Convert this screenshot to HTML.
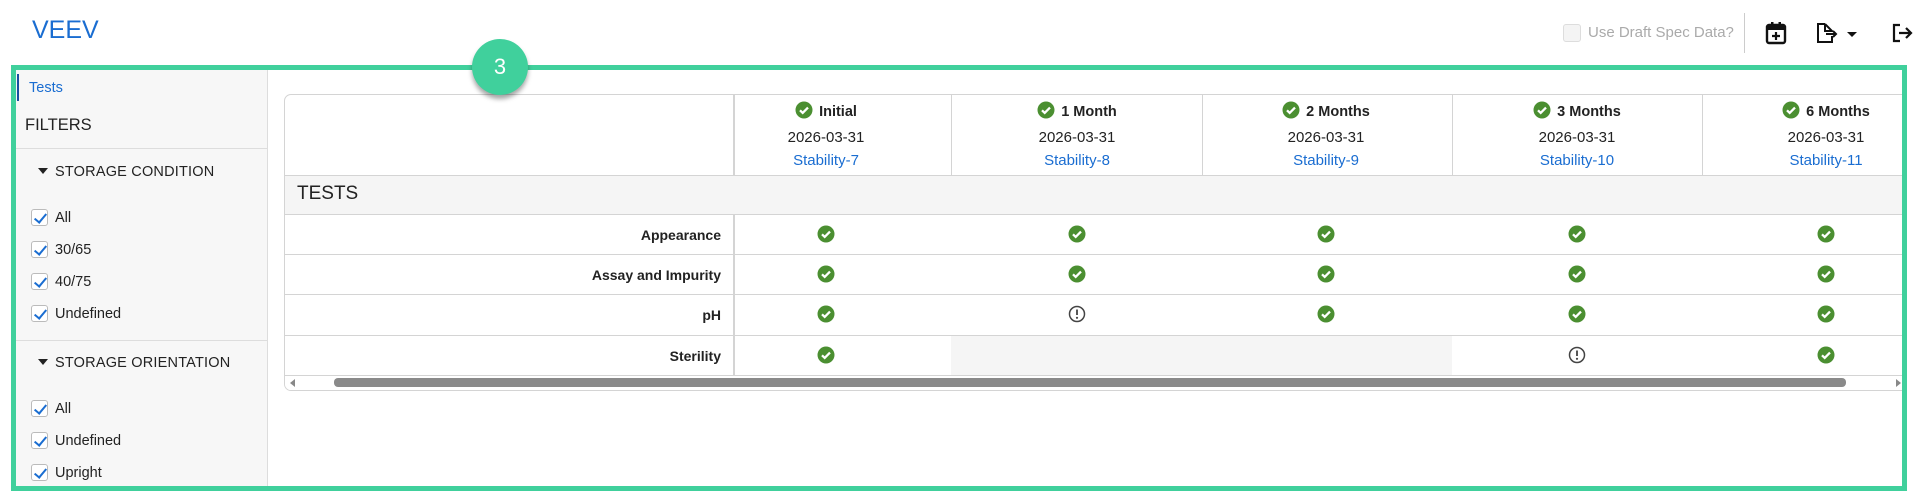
<!DOCTYPE html>
<html><head><style>
*{box-sizing:border-box;margin:0;padding:0}
body{width:1917px;height:504px;background:#fff;font-family:"Liberation Sans",Arial,sans-serif;position:relative;overflow:hidden;color:#222}
.a{position:absolute}
.veev{left:32px;top:16px;font-size:25px;color:#1a6dd1}
.frame{left:11px;top:65px;width:1896px;height:426px;border:5px solid #40d09c;overflow:hidden}
.badge{left:472px;top:39px;width:56px;height:56px;border-radius:50%;background:#40d09c;color:#fff;font-size:22px;text-align:center;line-height:56px;box-shadow:0 4px 5px rgba(0,0,0,.35)}
.side{left:0;top:0;width:252px;height:420px;background:#f7f7f7;border-right:1px solid #ddd}
.cb{width:17px;height:17px;border:1px solid #bbb;border-radius:3px;background:#fff}
.cb::after{content:"";position:absolute;left:5px;top:1px;width:5px;height:10px;border-right:2px solid #1a6dd1;border-bottom:2px solid #1a6dd1;transform:rotate(40deg)}
.lbl{font-size:14.5px;color:#222}
.hd{font-size:14.5px;color:#222;letter-spacing:.2px}
.card{left:268px;top:24px;width:1640px;height:297px;border:1px solid #d4d4d4;border-radius:7px;background:#fff;overflow:hidden}
.hline{height:1px;background:#d4d4d4;left:0;width:100%}
.t{font-size:15px}
.b{font-weight:bold}
.lnk{color:#1a6dd1}
.ck{width:18px;height:18px}
</style></head><body>
<div class="a veev">VEEV</div>

<div class="a" style="left:1563px;top:24px;width:18px;height:18px;border:1px solid #ddd;border-radius:3px;background:#f4f4f4"></div>
<div class="a" style="left:1588px;top:24px;font-size:15px;color:#aaa">Use Draft Spec Data?</div>
<div class="a" style="left:1744px;top:13px;width:1px;height:40px;background:#ccc"></div>
<svg class="a" style="left:1765px;top:21px" width="22" height="24" viewBox="0 0 22 24"><rect x="2" y="4" width="18" height="18" rx="2" fill="none" stroke="#111" stroke-width="2.4"/><rect x="2" y="4" width="18" height="5" fill="#111"/><rect x="6" y="1" width="2.5" height="5" fill="#111"/><rect x="13.5" y="1" width="2.5" height="5" fill="#111"/><path d="M11 11v8M7 15h8" stroke="#111" stroke-width="2.2"/></svg>
<svg class="a" style="left:1815px;top:22px" width="46" height="22" viewBox="0 0 46 22"><path d="M10 2H3v18h14v-6M10 2l7 7v1M10 2v7h7" fill="none" stroke="#111" stroke-width="2"/><path d="M11 12h10M18 9l3 3-3 3" fill="none" stroke="#111" stroke-width="2"/><path d="M32 10h10l-5 5z" fill="#111"/></svg>
<svg class="a" style="left:1891px;top:22px" width="22" height="22" viewBox="0 0 22 22"><path d="M9 3H3v16h6" fill="none" stroke="#111" stroke-width="2.2"/><path d="M8 11h12M15 6l5 5-5 5" fill="none" stroke="#111" stroke-width="2.2"/></svg>

<div class="a frame">
 <div class="a side">
  <div class="a" style="left:1px;top:4px;width:2px;height:27px;background:#1a4fa0"></div>
  <div class="a lbl lnk" style="left:13px;top:10px">Tests</div>
  <div class="a" style="left:9px;top:46px;font-size:16.5px;color:#222">FILTERS</div>
  <div class="a" style="left:0;top:78px;width:252px;height:1px;background:#ddd"></div>
  <div class="a" style="left:22px;top:98px;border-left:5px solid transparent;border-right:5px solid transparent;border-top:6px solid #222"></div>
  <div class="a hd" style="left:39px;top:94px">STORAGE CONDITION</div>
  <div class="a cb" style="left:15px;top:139px"></div><div class="a lbl" style="left:39px;top:140px">All</div>
  <div class="a cb" style="left:15px;top:171px"></div><div class="a lbl" style="left:39px;top:172px">30/65</div>
  <div class="a cb" style="left:15px;top:203px"></div><div class="a lbl" style="left:39px;top:204px">40/75</div>
  <div class="a cb" style="left:15px;top:235px"></div><div class="a lbl" style="left:39px;top:236px">Undefined</div>
  <div class="a" style="left:0;top:270px;width:252px;height:1px;background:#ddd"></div>
  <div class="a" style="left:22px;top:289px;border-left:5px solid transparent;border-right:5px solid transparent;border-top:6px solid #222"></div>
  <div class="a hd" style="left:39px;top:285px">STORAGE ORIENTATION</div>
  <div class="a cb" style="left:15px;top:330px"></div><div class="a lbl" style="left:39px;top:331px">All</div>
  <div class="a cb" style="left:15px;top:362px"></div><div class="a lbl" style="left:39px;top:363px">Undefined</div>
  <div class="a cb" style="left:15px;top:394px"></div><div class="a lbl" style="left:39px;top:395px">Upright</div>
 </div>
 <div class="a card" id="card"></div>
</div>

<svg width="0" height="0" style="position:absolute"><defs>
<symbol id="ok" viewBox="0 0 18 18"><circle cx="9" cy="9" r="8.5" fill="#4b8f31"/><path d="M5 9.3l2.7 2.6L13 6.6" fill="none" stroke="#fff" stroke-width="2.3"/></symbol>
<symbol id="w" viewBox="0 0 18 18"><circle cx="9" cy="9" r="7.5" fill="none" stroke="#444" stroke-width="1.5"/><path d="M9 4.5v5.5" stroke="#444" stroke-width="1.8"/><circle cx="9" cy="12.8" r="1.1" fill="#444"/></symbol>
</defs></svg>

<script>
var c=document.getElementById('card'),h='';
var ox=284,oy=94;
function X(x){return x-ox} function Y(y){return y-oy}
var cols=[732,950,1201,1451,1701];
var centers=[825,1076,1325,1576,1825];
var names=['Initial','1 Month','2 Months','3 Months','6 Months'];
cols.forEach(function(x,i){h+='<div class="a" style="left:'+X(x)+'px;top:0;width:'+(i==0?2:1)+'px;height:80px;background:#d4d4d4"></div>';});
h+='<div class="a" style="left:0;top:'+Y(174)+'px;width:100%;height:39px;background:#f5f5f5"></div>';
h+='<div class="a" style="left:'+X(950)+'px;top:'+Y(334)+'px;width:501px;height:40px;background:#f5f5f5"></div>';
h+='<div class="a" style="left:'+X(732)+'px;top:'+Y(213)+'px;width:2px;height:161px;background:#d4d4d4"></div>';
[174,213,253,293,334,374].forEach(function(y){h+='<div class="a hline" style="top:'+Y(y)+'px"></div>';});
h+='<div class="a" style="left:12px;top:'+Y(182)+'px;font-size:19px;color:#222">TESTS</div>';
names.forEach(function(n,i){var cx=centers[i];
 h+='<div class="a t b" style="left:'+(X(cx)-100)+'px;width:200px;text-align:center;top:'+Y(100)+'px;font-size:14.5px"><svg class="ck" style="vertical-align:-3px;margin-right:6px"><use href="#ok"/></svg>'+n+'</div>';
 h+='<div class="a t" style="left:'+(X(cx)-100)+'px;width:200px;text-align:center;top:'+Y(128)+'px">2026-03-31</div>';
 h+='<div class="a t lnk" style="left:'+(X(cx)-100)+'px;width:200px;text-align:center;top:'+Y(151)+'px">Stability-'+(7+i)+'</div>';
});
var rows=['Appearance','Assay and Impurity','pH','Sterility'],ry=[213,253,293,334];
var st=[['ok','ok','ok','ok','ok'],['ok','ok','ok','ok','ok'],['ok','w','ok','ok','ok'],['ok','','','w','ok']];
rows.forEach(function(r,j){var cy=ry[j]+20;
 h+='<div class="a t b" style="left:0;width:'+(X(720))+'px;text-align:right;top:'+(Y(cy)-7)+'px;font-size:14px">'+r+'</div>';
 st[j].forEach(function(s,i){if(!s)return;h+='<svg class="a ck" style="left:'+(X(centers[i])-9)+'px;top:'+(Y(cy)-9)+'px"><use href="#'+s+'"/></svg>';});
});
h+='<div class="a" style="left:0;top:'+Y(375)+'px;width:100%;height:14px;background:#fff"></div>';
h+='<div class="a" style="left:'+X(333)+'px;top:'+Y(377)+'px;width:1512px;height:9px;border-radius:4px;background:#8a8a8a"></div>';
h+='<div class="a" style="left:'+X(289)+'px;top:'+Y(378)+'px;border-top:4px solid transparent;border-bottom:4px solid transparent;border-right:5px solid #888"></div>';
h+='<div class="a" style="left:'+X(1895)+'px;top:'+Y(378)+'px;border-top:4px solid transparent;border-bottom:4px solid transparent;border-left:5px solid #888"></div>';
c.innerHTML=h;
</script>
<div class="a badge">3</div>
</body></html>
